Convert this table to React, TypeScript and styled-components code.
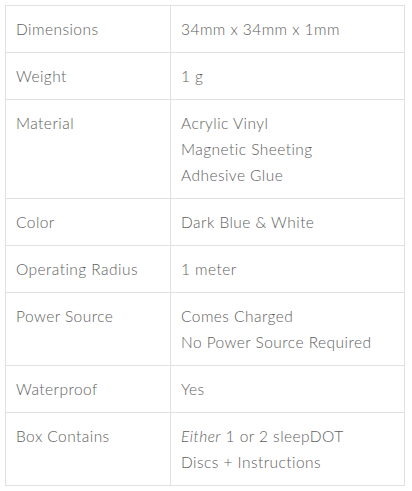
import React from "react";
import styled, { createGlobalStyle } from "styled-components";

const Global = createGlobalStyle`
  html, body { margin: 0; padding: 0; background: #fff; }
  body { font-family: "Lato", "Liberation Sans", sans-serif; }
`;

const Page = styled.div`
  padding: 5px;
`;

const Table = styled.table`
  width: 400px;
  border-collapse: collapse;
  table-layout: fixed;
  border: 1px solid #e1e1e1;
  color: #5e5e5e;
  font-size: 15.5px;
  line-height: 26px;
  letter-spacing: 0.45px;
`;

const Cell = styled.td<{ $label?: boolean }>`
  width: ${(p) => (p.$label ? "144px" : "auto")};
  padding: 10px;
  border: 1px solid #e1e1e1;
  vertical-align: top;
  font-weight: 300;
`;

const Line = styled.div``;

const rows: { label: string; value: React.ReactNode[] }[] = [
  { label: "Dimensions", value: ["34mm x 34mm x 1mm"] },
  { label: "Weight", value: ["1 g"] },
  { label: "Material", value: ["Acrylic Vinyl", "Magnetic Sheeting", "Adhesive Glue"] },
  { label: "Color", value: ["Dark Blue & White"] },
  { label: "Operating Radius", value: ["1 meter"] },
  { label: "Power Source", value: ["Comes Charged", "No Power Source Required"] },
  { label: "Waterproof", value: ["Yes"] },
  {
    label: "Box Contains",
    value: [
      <>
        <em>Either</em> 1 or 2 sleepDOT
      </>,
      "Discs + Instructions",
    ],
  },
];

export default function App() {
  return (
    <Page>
      <Global />
      <Table>
        <tbody>
          {rows.map((r) => (
            <tr key={r.label}>
              <Cell $label>{r.label}</Cell>
              <Cell>
                {r.value.map((v, i) => (
                  <Line key={i}>{v}</Line>
                ))}
              </Cell>
            </tr>
          ))}
        </tbody>
      </Table>
    </Page>
  );
}
